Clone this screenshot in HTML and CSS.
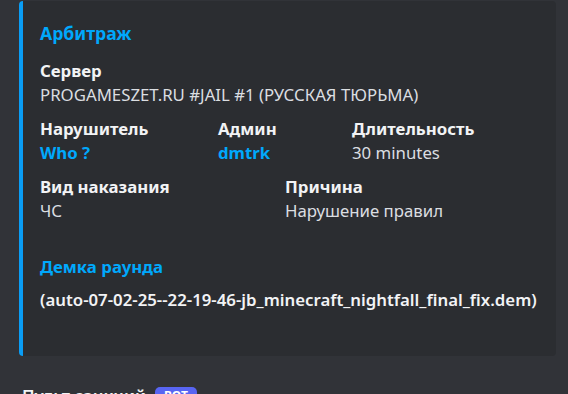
FILE: index.html
```html
<!DOCTYPE html>
<html>
<head>
<title>Арбитраж</title>
<link rel="stylesheet" href="styles.css">
</head>
<body>

<div class="embed">
  <div class="embed-title">Арбитраж</div>

  <div class="field">
    <div class="field-name">Сервер</div>
    <div class="field-value">PROGAMESZET.RU #JAIL #1 (РУССКАЯ ТЮРЬМА)</div>
  </div>

  <div class="field-row row-three">
    <div class="field">
      <div class="field-name">Нарушитель</div>
      <div class="field-value link">Who ?</div>
    </div>
    <div class="field">
      <div class="field-name">Админ</div>
      <div class="field-value link">dmtrk</div>
    </div>
    <div class="field">
      <div class="field-name">Длительность</div>
      <div class="field-value">30 minutes</div>
    </div>
  </div>

  <div class="field-row row-two">
    <div class="field">
      <div class="field-name">Вид наказания</div>
      <div class="field-value">ЧС</div>
    </div>
    <div class="field">
      <div class="field-name">Причина</div>
      <div class="field-value">Нарушение правил</div>
    </div>
  </div>

  <div class="demo">
    <div class="demo-name">Демка раунда</div>
    <div class="demo-file">(auto-07-02-25--22-19-46-jb_minecraft_nightfall_final_fix.dem)</div>
  </div>
</div>

<div class="message">
  <span class="username">Пульт санкций</span>
  <span class="bot-tag">BOT</span>
</div>

</body>
</html>
```

FILE: styles.css
```css
body {
  margin: 0;
  background-color: #313338;
  font-family: "Noto Sans", "Open Sans", sans-serif;
  color: #dbdee1;
}

.embed {
  margin: 1px 0 0 19px;
  width: 537px;
  box-sizing: border-box;
  background-color: #2b2d31;
  border-left: 4px solid #0a9df5;
  border-radius: 4px;
  padding: 20px 16px 45px 17px;
}

.embed-title {
  color: #00a8fc;
  font-size: 17.6px;
  font-weight: 700;
  line-height: 24px;
  margin-bottom: 15px;
}

.field-name {
  color: #f2f3f5;
  font-size: 16.8px;
  font-weight: 700;
  line-height: 22px;
  margin-bottom: 2px;
}

.field-value {
  font-size: 16.8px;
  line-height: 22px;
}

.field-value.link {
  color: #00a8fc;
  font-weight: 700;
}

.field-row {
  display: grid;
  margin-top: 12px;
}

.row-three {
  grid-template-columns: 178px 134px 1fr;
}

.row-two {
  grid-template-columns: 245px 1fr;
}

.demo {
  margin-top: 34px;
}

.demo-name {
  color: #00a8fc;
  font-size: 16.8px;
  font-weight: 700;
  line-height: 22px;
  margin-bottom: 11px;
}

.demo-file {
  color: #f2f3f5;
  font-size: 16.8px;
  font-weight: 600;
  line-height: 22px;
}

.message {
  display: flex;
  align-items: center;
  gap: 9px;
  margin: 29px 0 0 22px;
}

.username {
  color: #f2f3f5;
  font-size: 16.8px;
  font-weight: 600;
  line-height: 22px;
}

.bot-tag {
  background-color: #5865f2;
  color: #fff;
  font-size: 12px;
  font-weight: 700;
  line-height: 18px;
  padding: 0 9px;
  border-radius: 5px;
}
```
